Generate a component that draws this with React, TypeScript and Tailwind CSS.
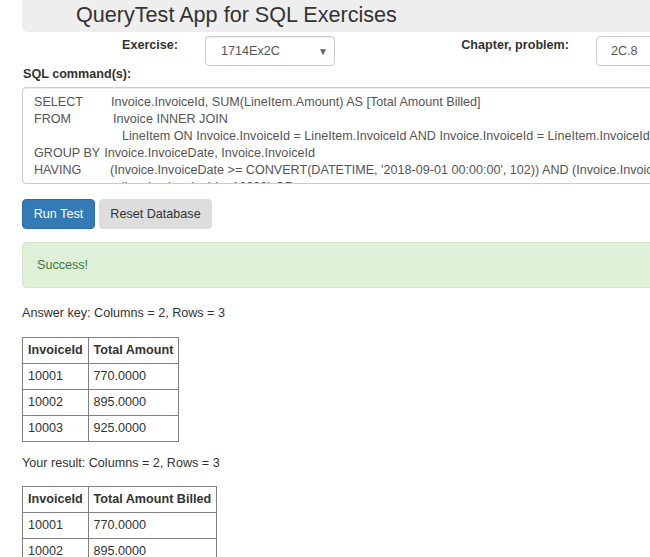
const font = { fontFamily: '"Liberation Sans", Arial, sans-serif' };

const sqlLines: { key: string; pad: number; text: string }[] = [
  { key: 'SELECT', pad: 77, text: 'Invoice.InvoiceId, SUM(LineItem.Amount) AS [Total Amount Billed]' },
  { key: 'FROM', pad: 79, text: 'Invoice INNER JOIN' },
  { key: '', pad: 88, text: 'LineItem ON Invoice.InvoiceId = LineItem.InvoiceId AND Invoice.InvoiceId = LineItem.InvoiceId' },
  { key: 'GROUP BY', pad: 0, text: 'Invoice.InvoiceDate, Invoice.InvoiceId' },
  { key: 'HAVING', pad: 76, text: "(Invoice.InvoiceDate >= CONVERT(DATETIME, '2018-09-01 00:00:00', 102)) AND (Invoice.InvoiceId = 10001) OR" },
  { key: '', pad: 86, text: '(Invoice.InvoiceId = 10002) OR' },
];

const ResultTable = ({ heads, rows }: { heads: string[]; rows: string[][] }) => (
  <table className="border-collapse border border-[#808080] text-[#333]">
    <thead>
      <tr>
        {heads.map((h) => (
          <th key={h} className="border border-[#808080] px-[5px] h-[26px] text-left font-bold leading-[17px]">
            {h}
          </th>
        ))}
      </tr>
    </thead>
    <tbody>
      {rows.map((r, i) => (
        <tr key={i}>
          {r.map((c, j) => (
            <td key={j} className="border border-[#808080] px-[5px] h-[26px] leading-[17px]">
              {c}
            </td>
          ))}
        </tr>
      ))}
    </tbody>
  </table>
);

export default function App() {
  return (
    <div className="w-[650px] h-[557px] overflow-hidden bg-white text-[12.6px] text-[#333]" style={font}>
      {/* header */}
      <div className="ml-[22px] h-[32px] bg-[#eeeeee] rounded-bl-[6px] pl-[54px] w-[700px]">
        <h2 className="text-[21.6px] leading-[30px] text-[#333]">QueryTest App for SQL Exercises</h2>
      </div>

      {/* exercise row */}
      <div className="flex items-start pl-[22px] mt-[4px] w-[800px]">
        <div className="w-[156px] text-right font-bold leading-[17px] pt-[1px]">Exercise:</div>
        <div className="ml-[27px] w-[130px] h-[30px] border border-[#ccc] rounded-[4px] flex items-center justify-between pl-[15px] pr-[6px] text-[#555] shadow-[inset_0_1px_1px_rgba(0,0,0,0.075)]">
          <span>1714Ex2C</span>
          <span className="text-[10px] text-[#666]">▼</span>
        </div>
        <div className="w-[234px] text-right font-bold leading-[17px] pt-[1px]">Chapter, problem:</div>
        <div className="ml-[27px] w-[100px] h-[30px] border border-[#ccc] rounded-[4px] flex items-center pl-[14px] text-[#555]">
          2C.8
        </div>
      </div>

      <div className="pl-[23px] font-bold leading-[17px]">SQL command(s):</div>

      {/* sql textarea */}
      <div className="ml-[22px] mt-[4px] w-[700px] h-[97px] border border-[#ccc] rounded-[4px] overflow-hidden pl-[11px] pt-[6px] text-[#555] leading-[17px] shadow-[inset_0_1px_1px_rgba(0,0,0,0.075)]">
        {sqlLines.map((l, i) => (
          <div key={i} className="flex whitespace-nowrap">
            {l.key ? (
              <span className="shrink-0" style={{ width: l.pad || undefined, marginRight: l.pad ? 0 : 4 }}>
                {l.key}
              </span>
            ) : (
              <span className="shrink-0" style={{ width: l.pad }} />
            )}
            <span>{l.text}</span>
          </div>
        ))}
      </div>

      {/* buttons */}
      <div className="flex gap-[4px] pl-[22px] mt-[15px]">
        <button className="h-[30px] w-[73px] bg-[#337ab7] border border-[#2e6da4] rounded-[4px] text-white">Run Test</button>
        <button className="h-[30px] w-[113px] bg-[#dddddd] border border-[#dddddd] rounded-[4px] text-[#333]">Reset Database</button>
      </div>

      {/* alert */}
      <div className="ml-[22px] mt-[13px] w-[700px] h-[46px] bg-[#dff0d8] border border-[#d6e9c6] rounded-[4px] text-[#3c763d] pl-[14px] flex items-center">
        Success!
      </div>

      <div className="pl-[22px] mt-[17px] leading-[17px]">Answer key: Columns = 2, Rows = 3</div>
      <div className="pl-[22px] mt-[15px]">
        <ResultTable
          heads={['InvoiceId', 'Total Amount']}
          rows={[
            ['10001', '770.0000'],
            ['10002', '895.0000'],
            ['10003', '925.0000'],
          ]}
        />
      </div>

      <div className="pl-[22px] mt-[13px] leading-[17px]">Your result: Columns = 2, Rows = 3</div>
      <div className="pl-[22px] mt-[14px]">
        <ResultTable
          heads={['InvoiceId', 'Total Amount Billed']}
          rows={[
            ['10001', '770.0000'],
            ['10002', '895.0000'],
            ['10003', '925.0000'],
          ]}
        />
      </div>
    </div>
  );
}
